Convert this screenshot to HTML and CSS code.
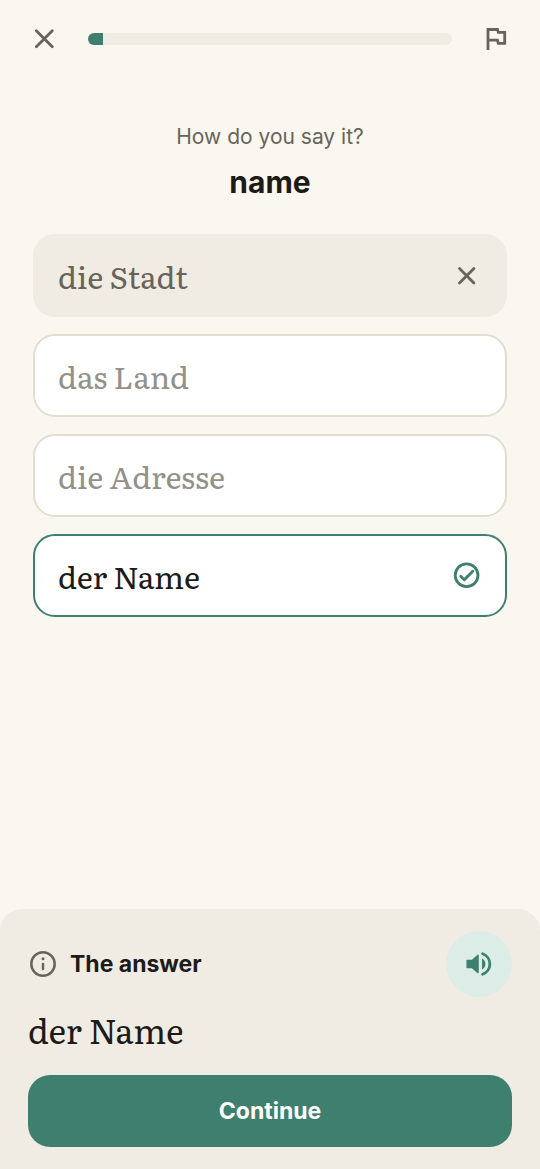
FILE: index.html
```html
<!DOCTYPE html>
<html lang="en">
<head>
<meta charset="utf-8">
<meta name="viewport" content="width=device-width, initial-scale=1">
<title>How do you say it?</title>
<link rel="stylesheet" href="styles.css">
</head>
<body>
<div class="screen">
  <header class="topbar">
    <button class="icon-button" aria-label="Close"><svg class="icon line" viewBox="0 0 32 32"><path d="M8.3 7.8l16 16M24.3 7.8l-16 16"/></svg></button>
    <div class="progress" role="progressbar" aria-label="Lesson progress" aria-valuenow="4" aria-valuemin="0" aria-valuemax="100"><div class="progress-fill"></div></div>
    <button class="icon-button" aria-label="Report"><svg class="icon flag" viewBox="0 0 32 32"><path d="M8 27V6.5h9.5l.8 2.9h6.4v11h-6.4l-.8-3.3H8"/></svg></button>
  </header>
  <main class="question">
    <p class="prompt">How do you say it?</p>
    <h1 class="word">name</h1>
    <div class="answers">
      <button class="answer wrong"><span>die Stadt</span><svg class="mark line" viewBox="0 0 30 30"><path d="M7.5 7.5l14.4 14.4M21.9 7.5L7.5 21.9"/></svg></button>
      <button class="answer">das Land</button>
      <button class="answer">die Adresse</button>
      <button class="answer correct"><span>der Name</span><svg class="mark line" viewBox="0 0 30 30"><circle cx="14.6" cy="14.2" r="11.4"/><path d="M8.7 15.2l3.6 3.6 8.5-8.6"/></svg></button>
    </div>
  </main>
  <footer class="result">
    <div class="result-head">
      <svg class="info" viewBox="0 0 30 30"><circle cx="15" cy="15" r="11.7"/><path d="M15 14.9v5"/><circle class="dot" cx="15" cy="9.8" r="1.5"/></svg>
      <h2 class="result-title">The answer</h2>
      <button class="sound" aria-label="Play audio"><svg class="icon speaker" viewBox="0 0 32 32"><path class="cone" d="M4.2 12.4h5.2l5.6-5v17.2l-5.6-5H4.2z"/><path class="inner" d="M19 10.6a6 6 0 0 1 0 10.8z"/><path class="wave" d="M19.6 5.8a10.8 10.8 0 0 1 0 20.4"/></svg></button>
    </div>
    <p class="solution">der Name</p>
    <button class="continue">Continue</button>
  </footer>
</div>
</body>
</html>
```
FILE: styles.css
```css
* { box-sizing: border-box; }
body { margin: 0; background: #faf7f0; color: #1c1b18; font-family: Inter, sans-serif; }
button { margin: 0; padding: 0; border: 0; background: none; font: inherit; color: inherit; cursor: pointer; }
h1, h2, p { margin: 0; }
svg { display: block; fill: none; stroke: currentColor; flex: none; }
.screen { min-height: 100vh; display: flex; flex-direction: column; }
.topbar { display: flex; align-items: center; gap: 28px; padding: 23px 28px; color: #68645a; }
.icon { width: 32px; height: 32px; }
.line { stroke-width: 2.8; stroke-linecap: round; stroke-linejoin: round; }
.flag { stroke-width: 2.8; }
.progress { flex: 1; height: 12px; border-radius: 6px; overflow: hidden; background: #f0ece4; }
.progress-fill { width: 4%; height: 100%; background: #3f7f6e; }
.question { flex: 1; padding: 44px 33px 32px; text-align: center; }
.prompt { font-size: 21px; line-height: 30px; color: #68645a; }
.word { margin-top: 10px; font-size: 30px; line-height: 40px; font-weight: 700; }
.answers { display: flex; flex-direction: column; gap: 17px; margin-top: 32px; }
.answer { display: flex; align-items: center; justify-content: space-between; min-height: 83px; padding: 0 23px; border: 2px solid #e3ddcf; border-radius: 22px; background: #fff; color: #94918a; font-family: Literata, "Noto Serif", "DejaVu Serif", "Liberation Serif", serif; font-size: 31px; line-height: 40px; text-align: left; }
.mark { width: 30px; height: 30px; }
.wrong { background: #f0ece4; border-color: #f0ece4; color: #68645a; }
.correct { border-color: #3f7f6e; color: #1c1b18; }
.correct .mark { color: #3f7f6e; }
.result { padding: 22px 28px; border-radius: 22px 22px 0 0; background: #f0ece4; }
.result-head { display: flex; align-items: center; gap: 12px; }
.info { width: 30px; height: 30px; color: #68645a; stroke-width: 2.5; stroke-linecap: round; }
.dot { fill: currentColor; stroke: none; }
.result-title { flex: 1; font-size: 23px; line-height: 32px; font-weight: 700; }
.sound { display: grid; place-items: center; width: 66px; height: 66px; border-radius: 50%; background: #dcece6; color: #3f7f6e; }
.cone { fill: currentColor; stroke-width: 1.5; stroke-linejoin: round; }
.inner { fill: currentColor; stroke: none; }
.wave { stroke-width: 2.8; stroke-linecap: round; }
.solution { padding: 10px 0 24px; font-family: Literata, "Noto Serif", "DejaVu Serif", "Liberation Serif", serif; font-size: 34px; line-height: 44px; }
.continue { width: 100%; height: 72px; border-radius: 22px; background: #3f7f6e; color: #fff; font-size: 23px; font-weight: 700; }
```
